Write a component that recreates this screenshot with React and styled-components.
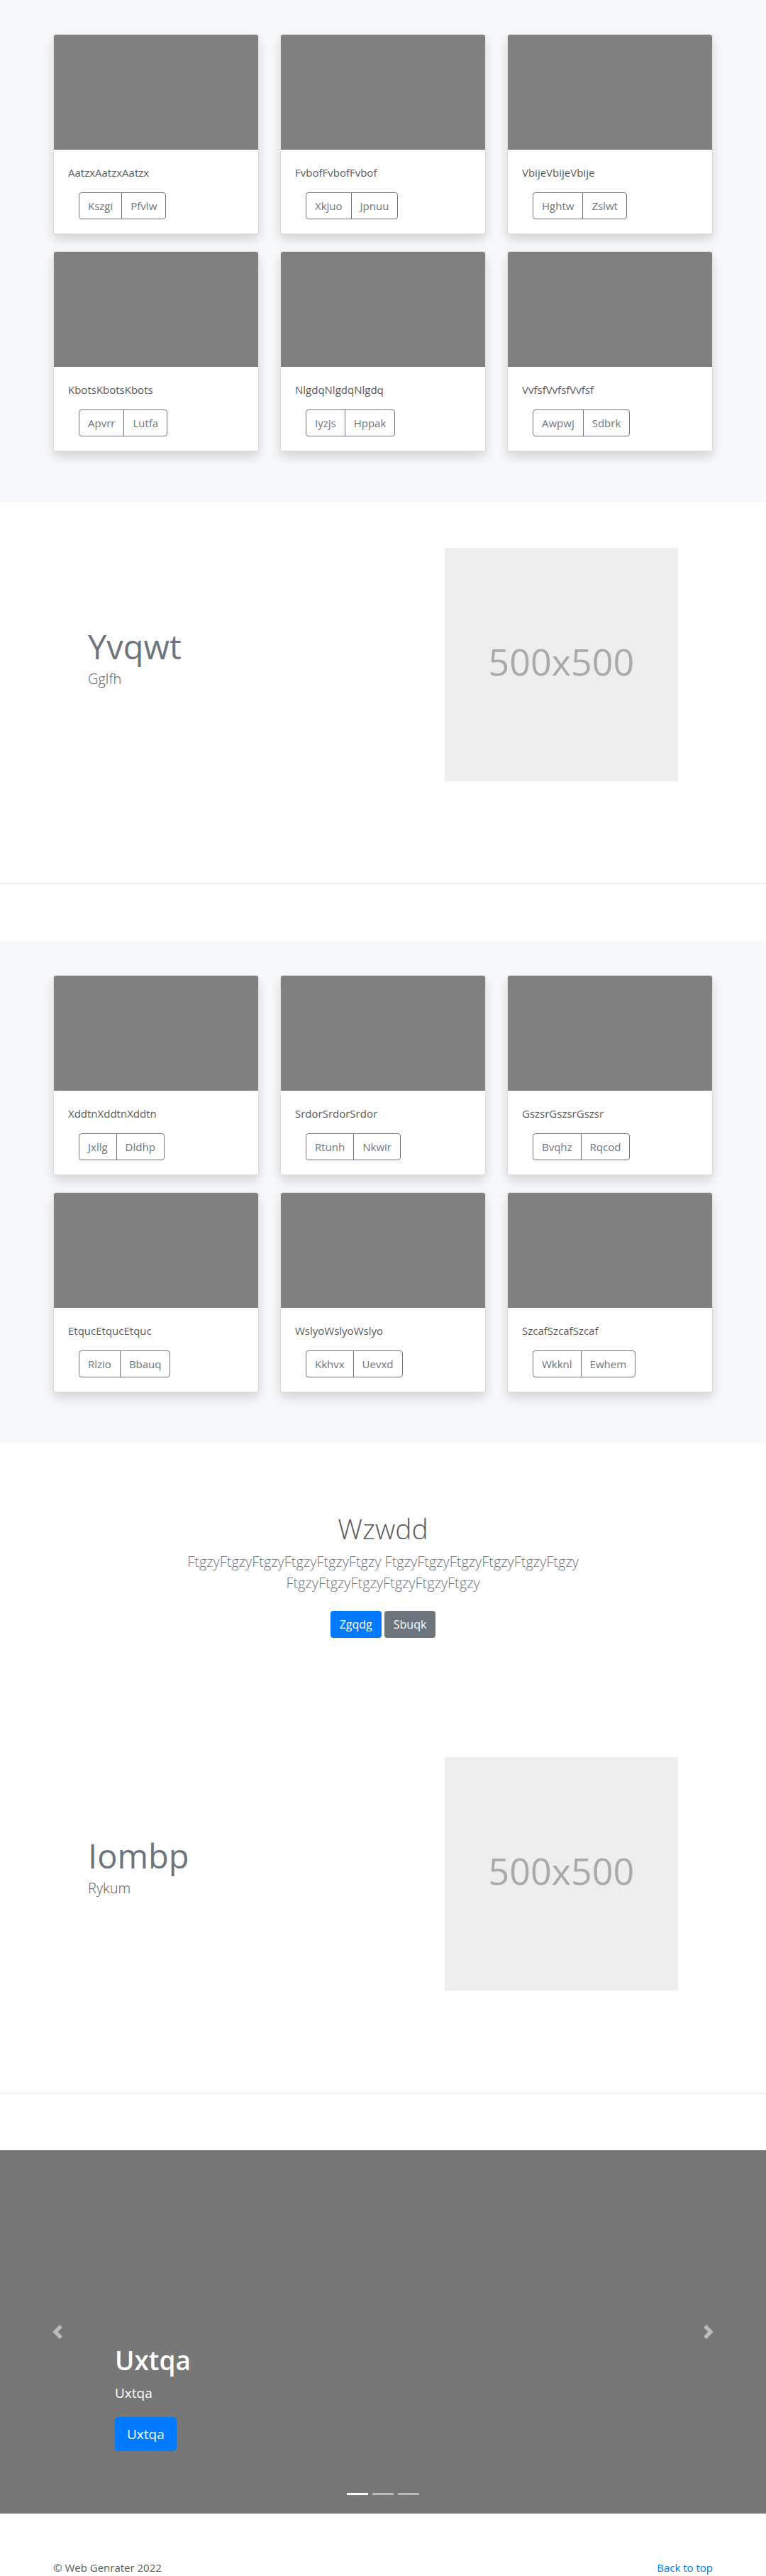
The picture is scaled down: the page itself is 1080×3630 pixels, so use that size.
import React from "react";
import styled, { createGlobalStyle } from "styled-components";

const GlobalStyle = createGlobalStyle`
  *, *::before, *::after { box-sizing: border-box; }
  body {
    margin: 0;
    background: #fff;
    color: #5a5a5a;
    font-family: "Open Sans", "Noto Sans", sans-serif;
    font-size: 15px;
    line-height: 24px;
  }
  h1, h2, p { margin: 0; }
`;

const Container = styled.div`
  width: 100%;
  max-width: 960px;
  margin: 0 auto;
  padding: 0 15px;
`;

const Album = styled.section`
  padding: 48px 0;
  background: #f8f9fb;
`;

const CardGrid = styled.div`
  display: grid;
  grid-template-columns: repeat(3, 1fr);
  column-gap: 30px;
  row-gap: 24px;
  padding-bottom: 24px;
`;

const Card = styled.article`
  border: 1px solid rgba(0, 0, 0, 0.125);
  border-radius: 4px;
  background: #fff;
  background-clip: border-box;
  box-shadow: 0 8px 16px rgba(0, 0, 0, 0.15);
`;

const CardImage = styled.div`
  height: 162px;
  border-radius: 3px 3px 0 0;
  background: #808080;
`;

const CardBody = styled.div`
  display: flex;
  flex-direction: column;
  align-items: flex-start;
  gap: 16px;
  padding: 20px;
`;

const ButtonGroup = styled.div`
  display: flex;
  margin-left: 15px;
`;

const OutlineButton = styled.button`
  padding: 6px 12px;
  border: 1px solid #6c757d;
  border-radius: 4px;
  background: transparent;
  color: #6c757d;
  font: inherit;
  cursor: pointer;

  &:first-child {
    border-top-right-radius: 0;
    border-bottom-right-radius: 0;
  }
  & + & {
    margin-left: -1px;
    border-top-left-radius: 0;
    border-bottom-left-radius: 0;
  }
`;

const FeatureWrap = styled.section`
  max-width: 960px;
  margin: 0 auto;
  padding: 64px;
`;

const FeatureRow = styled.div`
  display: grid;
  grid-template-columns: minmax(0, 7fr) minmax(0, 5fr);
  margin: 0 -15px;
`;

const FeatureText = styled.div`
  padding: 112px 15px 0;
`;

const FeatureMedia = styled.div`
  padding: 0 15px;
`;

const FeatureHeading = styled.h2`
  margin-bottom: 4px;
  color: #6c757d;
  font-size: 47px;
  font-weight: 400;
  line-height: 54px;
`;

const Lead = styled.p`
  color: ${(p) => (p.$muted ? "#6c757d" : "inherit")};
  font-size: 20px;
  font-weight: 300;
  line-height: 30px;
`;

const Placeholder = styled.div`
  display: flex;
  align-items: center;
  justify-content: center;
  aspect-ratio: 1;
  padding-bottom: 10px;
  background: #eee;
  color: #aaa;
  font-size: 52px;
  line-height: 64px;
`;

const Divider = styled.hr`
  margin: 80px 0;
  border: 0;
  border-top: 1px solid rgba(0, 0, 0, 0.1);
`;

const Hero = styled.section`
  padding: 96px 15px;
  text-align: center;
`;

const HeroInner = styled.div`
  max-width: 640px;
  margin: 0 auto;
`;

const HeroTitle = styled.h1`
  margin-bottom: 8px;
  font-size: 39px;
  font-weight: 300;
  line-height: 48px;
`;

const Actions = styled.div`
  display: flex;
  justify-content: center;
  gap: 4px;
  padding: 24px 0 8px;
`;

const SolidButton = styled.button`
  padding: ${(p) => (p.$large ? "9px 17px" : "7px 13px")};
  border: 0;
  border-radius: ${(p) => (p.$large ? 5 : 4)}px;
  background: ${(p) => (p.$secondary ? "#6c757d" : "#007bff")};
  color: #fff;
  font: inherit;
  font-size: ${(p) => (p.$large ? 19 : 16)}px;
  line-height: ${(p) => (p.$large ? 30 : 24)}px;
  cursor: pointer;
`;

const Carousel = styled.section`
  position: relative;
  display: flex;
  height: 512px;
  background: #777;
  color: #fff;
`;

const CarouselControl = styled.button`
  display: flex;
  flex: 0 0 15%;
  align-items: center;
  justify-content: center;
  padding: 0;
  border: 0;
  background: none;
  color: #fff;
  opacity: 0.5;
  cursor: pointer;

  svg { display: block; width: 20px; height: 20px; fill: currentColor; }
`;

const Caption = styled.div`
  flex: 1;
  align-self: flex-end;
  padding-bottom: 88px;
`;

const CaptionTitle = styled.h1`
  margin-bottom: 8px;
  font-size: 37px;
  font-weight: 600;
  line-height: 48px;
`;

const CaptionText = styled.p`
  margin-bottom: 20px;
  font-size: 19px;
  line-height: 28px;
`;

const Indicators = styled.div`
  position: absolute;
  right: 0;
  bottom: 26px;
  left: 0;
  display: flex;
  justify-content: center;
  gap: 6px;
`;

const Indicator = styled.button`
  width: 30px;
  height: 3px;
  padding: 0;
  border: 0;
  background: #fff;
  opacity: ${(p) => (p.$active ? 1 : 0.5)};
  cursor: pointer;
`;

const FooterRow = styled.footer`
  display: flex;
  justify-content: space-between;
  padding-top: 64px;
`;

const FooterLink = styled.a`
  color: #007bff;
  text-decoration: none;
`;

const firstAlbum = [
  ["Aatzx", "Kszgi", "Pfvlw"],
  ["Fvbof", "Xkjuo", "Jpnuu"],
  ["Vbije", "Hghtw", "Zslwt"],
  ["Kbots", "Apvrr", "Lutfa"],
  ["Nlgdq", "Iyzjs", "Hppak"],
  ["Vvfsf", "Awpwj", "Sdbrk"],
];

const secondAlbum = [
  ["Xddtn", "Jxllg", "Dldhp"],
  ["Srdor", "Rtunh", "Nkwir"],
  ["Gszsr", "Bvqhz", "Rqcod"],
  ["Etquc", "Rlzio", "Bbauq"],
  ["Wslyo", "Kkhvx", "Uevxd"],
  ["Szcaf", "Wkknl", "Ewhem"],
];

function CardAlbum({ items }) {
  return (
    <Album>
      <Container>
        <CardGrid>
          {items.map(([name, left, right]) => (
            <Card key={name}>
              <CardImage />
              <CardBody>
                <p>{name.repeat(3)}</p>
                <ButtonGroup>
                  <OutlineButton type="button">{left}</OutlineButton>
                  <OutlineButton type="button">{right}</OutlineButton>
                </ButtonGroup>
              </CardBody>
            </Card>
          ))}
        </CardGrid>
      </Container>
    </Album>
  );
}

function Feature({ title, text }) {
  return (
    <>
      <FeatureWrap>
        <FeatureRow>
          <FeatureText>
            <FeatureHeading>{title}</FeatureHeading>
            <Lead>{text}</Lead>
          </FeatureText>
          <FeatureMedia>
            <Placeholder>500x500</Placeholder>
          </FeatureMedia>
        </FeatureRow>
      </FeatureWrap>
      <Divider />
    </>
  );
}

export default function App() {
  const phrase = "Ftgzy".repeat(6);
  return (
    <>
      <GlobalStyle />
      <main>
        <CardAlbum items={firstAlbum} />
        <Feature title="Yvqwt" text="Gglfh" />
        <CardAlbum items={secondAlbum} />
        <Hero>
          <HeroInner>
            <HeroTitle>Wzwdd</HeroTitle>
            <Lead $muted>{[phrase, phrase, phrase].join(" ")}</Lead>
            <Actions>
              <SolidButton type="button">Zgqdg</SolidButton>
              <SolidButton type="button" $secondary>Sbuqk</SolidButton>
            </Actions>
          </HeroInner>
        </Hero>
        <Feature title="Iombp" text="Rykum" />
        <Carousel>
          <CarouselControl type="button" aria-label="Previous">
            <svg viewBox="0 0 8 8" aria-hidden="true">
              <path d="M5.25 0l-4 4 4 4 1.5-1.5-2.5-2.5 2.5-2.5-1.5-1.5z" />
            </svg>
          </CarouselControl>
          <Caption>
            <CaptionTitle>Uxtqa</CaptionTitle>
            <CaptionText>Uxtqa</CaptionText>
            <SolidButton type="button" $large>Uxtqa</SolidButton>
          </Caption>
          <CarouselControl type="button" aria-label="Next">
            <svg viewBox="0 0 8 8" aria-hidden="true">
              <path d="M2.75 0l-1.5 1.5 2.5 2.5-2.5 2.5 1.5 1.5 4-4-4-4z" />
            </svg>
          </CarouselControl>
          <Indicators>
            <Indicator type="button" aria-label="Slide 1" $active />
            <Indicator type="button" aria-label="Slide 2" />
            <Indicator type="button" aria-label="Slide 3" />
          </Indicators>
        </Carousel>
      </main>
      <Container>
        <FooterRow>
          <p>© Web Genrater 2022</p>
          <FooterLink href="#">Back to top</FooterLink>
        </FooterRow>
      </Container>
    </>
  );
}
